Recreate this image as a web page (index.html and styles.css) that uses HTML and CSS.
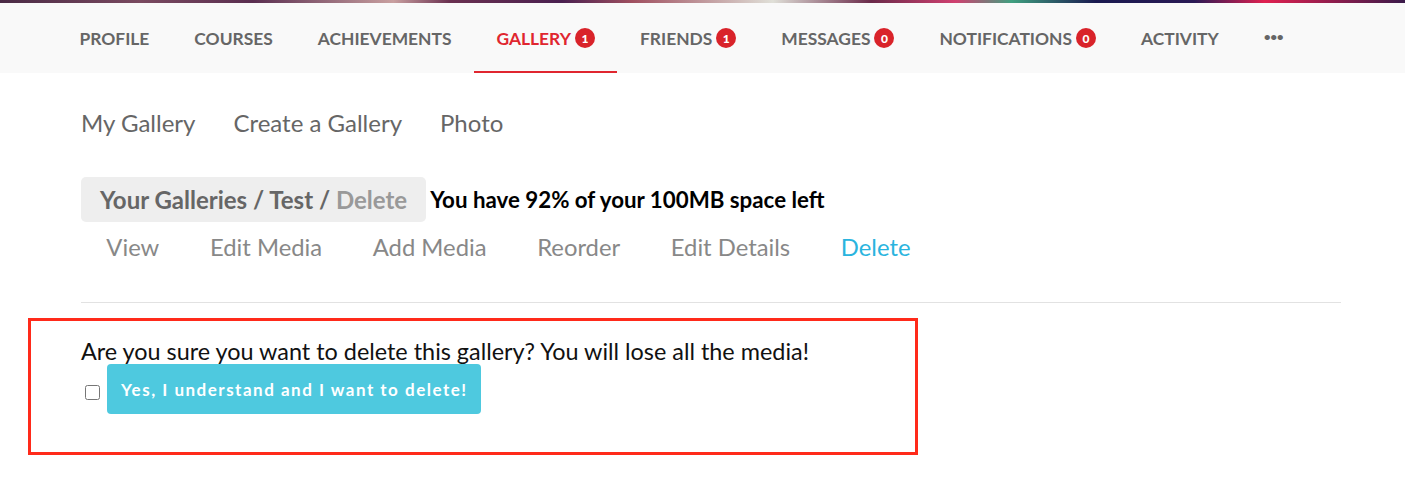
FILE: index.html
```html
<!DOCTYPE html>
<html lang="en">
<head>
<meta charset="utf-8">
<title>Gallery - Delete</title>
<link rel="stylesheet" href="styles.css">
</head>
<body>
<div class="topstrip"></div>
<nav class="mainnav">
  <a class="navitem">PROFILE</a>
  <a class="navitem">COURSES</a>
  <a class="navitem">ACHIEVEMENTS</a>
  <a class="navitem active">GALLERY<span class="badge">1</span></a>
  <a class="navitem">FRIENDS<span class="badge">1</span></a>
  <a class="navitem">MESSAGES<span class="badge">0</span></a>
  <a class="navitem">NOTIFICATIONS<span class="badge">0</span></a>
  <a class="navitem">ACTIVITY</a>
  <a class="navitem more">&bull;&bull;&bull;</a>
</nav>
<main class="content">
  <div class="subnav">
    <a>My Gallery</a>
    <a>Create a Gallery</a>
    <a>Photo</a>
  </div>
  <div class="crumbrow">
    <div class="crumb">Your Galleries / Test / <span class="crumb-current">Delete</span></div>
    <div class="space">You have 92% of your 100MB space left</div>
  </div>
  <div class="tabs">
    <a>View</a>
    <a>Edit Media</a>
    <a>Add Media</a>
    <a>Reorder</a>
    <a>Edit Details</a>
    <a class="tab-active">Delete</a>
  </div>
  <hr class="rule">
  <section class="confirm">
    <p class="question">Are you sure you want to delete this gallery? You will lose all the media!</p>
    <div class="confirm-row">
      <input type="checkbox" class="check">
      <button class="btn">Yes, I understand and I want to delete!</button>
    </div>
  </section>
</main>
</body>
</html>
```
FILE: styles.css
```css
* { box-sizing: border-box; }
body {
  margin: 0;
  font-family: Lato, "Open Sans", "Liberation Sans", sans-serif;
  background: #fff;
  color: #111;
}
.topstrip {
  height: 3px;
  background: linear-gradient(90deg, #4a2a45 0%, #7a4a60 10%, #5a2e50 18%, #c9a0a0 28%, #6a3050 32%, #4a2050 40%, #a05060 45%, #e0e0d8 55%, #6a2a4a 62%, #d04070 68%, #40a080 72%, #1a1a50 78%, #2a1a55 85%, #e02050 90%, #3a1a4a 100%);
}
.mainnav {
  display: flex;
  align-items: flex-start;
  height: 70px;
  padding-left: 57px;
  background: #f9f9f9;
}
.navitem {
  display: flex;
  align-items: center;
  height: 70px;
  padding: 2px 22.5px 0;
  font-size: 17.4px;
  font-weight: 700;
  color: #666;
  border-bottom: 2px solid transparent;
}
.navitem.active {
  color: #e0262f;
  border-bottom-color: #e0262f;
}
.navitem.more {
  font-size: 12px;
  letter-spacing: -0.5px;
  padding-bottom: 4px;
}
.badge {
  display: inline-flex;
  align-items: center;
  justify-content: center;
  width: 20px;
  height: 20px;
  margin-left: 4px;
  border-radius: 50%;
  background: #d9232a;
  color: #fff;
  font-size: 12px;
  font-weight: 900;
}
.content {
  padding: 0 64px 0 81px;
}
.subnav {
  display: flex;
  gap: 38px;
  padding-top: 35px;
  height: 104px;
  font-size: 24px;
  color: #666;
}
.crumbrow {
  display: flex;
  align-items: center;
}
.crumb {
  height: 45px;
  display: flex;
  align-items: center;
  padding: 0 19px;
  background: #eee;
  border-radius: 5px;
  font-size: 24px;
  font-weight: 700;
  color: #666;
  white-space: pre;
}
.crumb-current { color: #999; }
.space {
  margin-left: 4px;
  font-size: 22.3px;
  font-weight: 700;
  color: #000;
}
.tabs {
  display: flex;
  height: 52px;
  align-items: center;
  font-size: 23.8px;
  color: #888;
  padding-bottom: 3px;
}
.tabs a { padding: 0 25.35px; }
.tab-active { color: #2ab4de; }
.rule {
  margin: 28px 0 0;
  border: 0;
  border-top: 1px solid #e2e2e2;
}
.confirm {
  margin: 15px 0 0 -53px;
  width: 890px;
  height: 137px;
  border: 3px solid #ff2a1a;
  padding: 17px 0 0 50px;
}
.question {
  margin: 0;
  font-size: 23.4px;
  color: #111;
  line-height: 27px;
}
.confirm-row {
  display: flex;
  align-items: center;
  margin-top: -1px;
}
.check {
  width: 15px;
  height: 15px;
  margin: 6px 7px 0 4px;
}
.btn {
  height: 50px;
  padding: 0 13px 0 14px;
  border: 0;
  border-radius: 4px;
  background: #4ec9df;
  color: #fff;
  font-family: Lato, "Open Sans", sans-serif;
  font-size: 17px;
  font-weight: 700;
  letter-spacing: 1.5px;
}
```
